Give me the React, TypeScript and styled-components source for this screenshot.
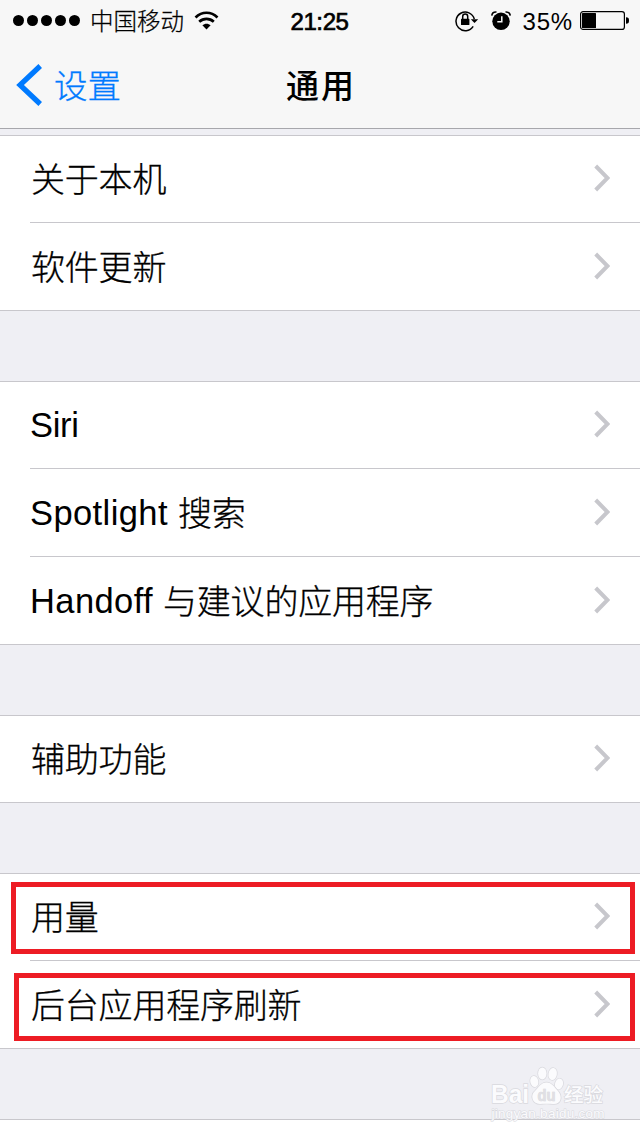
import React from 'react';
import styled, { createGlobalStyle } from 'styled-components';

const GlobalStyle = createGlobalStyle`
  * { box-sizing: border-box; }
  body {
    margin: 0;
    background: #efeff4;
    font-family: "Liberation Sans", "Noto Sans CJK SC", sans-serif;
    color: #000;
  }
`;

const Screen = styled.main`
  position: relative;
  width: 640px;
  height: 1136px;
  overflow: hidden;
  background: #efeff4;
`;

const Header = styled.header`
  height: 129px;
  background: #f7f7f7;
  border-bottom: 1px solid #a7a7ac;
`;

const StatusBar = styled.div`
  display: grid;
  grid-template-columns: 1fr auto 1fr;
  align-items: center;
  height: 41px;
  padding: 0 11px 0 13px;
`;

const StatusSide = styled.div<{ $end?: boolean }>`
  display: flex;
  align-items: center;
  justify-content: ${(p) => (p.$end ? 'flex-end' : 'flex-start')};
`;

const Indicators = styled.div`
  display: flex;
  align-items: center;
  gap: 12px;
`;

const Dots = styled.div`
  display: flex;
  gap: 3px;
  margin-right: 10px;
`;

const Dot = styled.i`
  width: 11px;
  height: 11px;
  border-radius: 50%;
  background: #000;
`;

const Carrier = styled.span`
  font-size: 23.5px;
  line-height: 38px;
  padding-top: 3px;
  font-weight: 300;
  -webkit-text-stroke: 0.25px #000;
  margin-right: 10px;
`;

const Clock = styled.time`
  font-size: 24px;
  line-height: 38px;
  -webkit-text-stroke: 0.7px #000;
  padding-top: 3px;
  margin-right: 3px;
  letter-spacing: -0.4px;
`;

const Percent = styled.span`
  font-size: 24px;
  line-height: 38px;
  letter-spacing: 0.8px;
  padding-top: 3px;
  margin: 0 7px 0 12px;
`;

const NavBar = styled.nav`
  display: grid;
  grid-template-columns: 1fr auto 1fr;
  align-items: center;
  height: 87px;
  padding-left: 16px;
`;

const Back = styled.a`
  display: flex;
  align-items: center;
  gap: 11px;
  color: #007aff;
  font-size: 33.5px;
  line-height: 44px;
  font-weight: 300;
  -webkit-text-stroke: 0.3px #007aff;
`;

const BackLabel = styled.span`
  padding-top: 4px;
`;

const Title = styled.h1`
  margin: 0 14px 0 0;
  padding-top: 4px;
  font-size: 33px;
  line-height: 44px;
  letter-spacing: 2px;
  font-weight: 500;
`;

const List = styled.div`
  display: flex;
  flex-direction: column;
  gap: 70px;
  padding-top: 6px;
`;

const Group = styled.section`
  border-top: 1px solid #c8c7cc;
  background: #fff;
`;

const Row = styled.div`
  position: relative;
  display: flex;
  align-items: center;
  justify-content: space-between;
  height: 88px;
  padding: 0 30px 3px;
  font-size: 34px;
  &:first-child { height: 87px; }
  &::after {
    content: '';
    position: absolute;
    left: 30px;
    right: 0;
    bottom: 0;
    height: 1px;
    background: #c8c7cc;
  }
  &:last-child::after { left: 0; }
`;

const Label = styled.div`
  display: flex;
  align-items: center;
  line-height: 50px;
`;

const Latin = styled.span<{ $tracking: number }>`
  font-size: 34.5px;
  letter-spacing: ${(p) => p.$tracking}px;
  padding-top: 2px;
  margin-right: 10px;
`;

const Han = styled.span<{ $indent?: number }>`
  padding-top: 4px;
  padding-left: ${(p) => p.$indent ?? 0}px;
  font-size: 34px;
  letter-spacing: -0.2px;
  font-weight: 300;
  -webkit-text-stroke: 0.3px #000;
`;

const Highlight = styled.div<{ $left: number; $top: number; $height: number }>`
  position: absolute;
  z-index: 1;
  left: ${(p) => p.$left}px;
  right: 5px;
  top: ${(p) => p.$top}px;
  height: ${(p) => p.$height}px;
  border: 5px solid #ed1c24;
`;

const Blank = styled.div`
  height: 40px;
`;

const Watermark = styled.svg`
  position: absolute;
  left: 484px;
  top: 1060px;
`;

const WifiIcon = () => (
  <svg width="26" height="20" viewBox="0 0 26 20" fill="none" stroke="#000">
    <path d="M1.500 6.400C8 .2 17 .2 23.500 6.400" strokeWidth="2.700" />
    <path d="M5.200 10.800C9.400 6.900 15.600 6.900 19.800 10.800" strokeWidth="2.700" />
    <path d="M12.500 18.500L8.400 14.200C10.700 12.100 14.300 12.100 16.600 14.200Z" fill="#000" stroke="none" />
  </svg>
);

const RotationLockIcon = () => (
  <svg width="24" height="22" viewBox="0 0 24 22" fill="none" stroke="#000" strokeWidth="1.500">
    <path d="M18.200 16.300A9.300 9.300 0 1 1 19.300 9" />
    <path d="M15.800 9.300H23.200L19.500 13Z" fill="#000" stroke="none" />
    <rect x="6" y="8.800" width="8.400" height="6.200" rx=".6" fill="#000" stroke="none" />
    <path d="M7.700 9V6.600A2.500 2.500 0 0 1 12.700 6.600V9" />
  </svg>
);

const AlarmIcon = () => (
  <svg width="20" height="20" viewBox="0 0 20 20" fill="none">
    <circle cx="10" cy="10.300" r="8.700" fill="#000" />
    <path d="M10.800 5.300V10.800H6.300" stroke="#f7f7f7" strokeWidth="1.500" />
    <path d="M.8 4.600C1 2.300 2.800 .8 5.500 1M19.200 4.600C19 2.300 17.200 .8 14.500 1" stroke="#000" strokeWidth="1.600" />
  </svg>
);

const BatteryIcon = () => (
  <svg width="49" height="19" viewBox="0 0 49 19">
    <rect x=".6" y=".6" width="43.800" height="17.800" rx="2.500" fill="none" stroke="#000" strokeWidth="1.200" />
    <rect x="2" y="2" width="14" height="15" rx=".5" fill="#000" />
    <path d="M46 6.200C48.300 6.200 49 7.300 49 9.500S48.300 12.800 46 12.800Z" fill="#000" />
  </svg>
);

const BackIcon = () => (
  <svg width="27" height="42" viewBox="0 0 27 42">
    <path d="M24.200 2L4 21L24.200 40" fill="none" stroke="#007aff" strokeWidth="5.200" />
  </svg>
);

const Chevron = () => (
  <svg width="16" height="28" viewBox="0 0 16 28">
    <path d="M1.700 2L13.500 14L1.700 26" fill="none" stroke="#c7c7cc" strokeWidth="4" />
  </svg>
);

type Mark = { left: number; top: number; height: number };
type Item = { latin?: string; tracking?: number; han?: string; indent?: number; mark?: Mark };

const groups: Item[][] = [
  [{ han: '关于本机', indent: 1 }, { han: '软件更新', indent: 1 }],
  [
    { latin: 'Siri', tracking: -0.3 },
    { latin: 'Spotlight', tracking: 0.4, han: '搜索' },
    { latin: 'Handoff', tracking: 0.4, han: '与建议的应用程序' },
  ],
  [{ han: '辅助功能', indent: 1 }],
  [
    { han: '用量', indent: 1, mark: { left: 11, top: 8, height: 72 } },
    { han: '后台应用程序刷新', indent: 1, mark: { left: 14, top: 12, height: 68 } },
  ],
];

export default function App() {
  return (
    <Screen>
      <GlobalStyle />
      <Header>
        <StatusBar>
          <StatusSide>
            <Dots>{[0, 1, 2, 3, 4].map((n) => <Dot key={n} />)}</Dots>
            <Carrier>中国移动</Carrier>
            <WifiIcon />
          </StatusSide>
          <Clock>21:25</Clock>
          <StatusSide $end>
            <Indicators>
              <RotationLockIcon />
              <AlarmIcon />
            </Indicators>
            <Percent>35%</Percent>
            <BatteryIcon />
          </StatusSide>
        </StatusBar>
        <NavBar>
          <Back><BackIcon /><BackLabel>设置</BackLabel></Back>
          <Title>通用</Title>
        </NavBar>
      </Header>
      <List>
        {groups.map((items, i) => (
          <Group key={i}>
            {items.map(({ latin, tracking, han, indent, mark }) => (
              <Row key={latin ?? han}>
                <Label>
                  {latin && <Latin $tracking={tracking ?? 0}>{latin}</Latin>}
                  {han && <Han $indent={indent}>{han}</Han>}
                </Label>
                <Chevron />
                {mark && <Highlight $left={mark.left} $top={mark.top} $height={mark.height} />}
              </Row>
            ))}
          </Group>
        ))}
        <Group><Blank /></Group>
      </List>
      <Watermark width="130" height="64" viewBox="0 0 130 64" fill="#fbfbfd" stroke="#d9d9de" strokeWidth="1.400" paintOrder="stroke" fontFamily="Liberation Sans, Noto Sans CJK SC, sans-serif" fontWeight="700">
        <text x="7" y="43" fontSize="25.500" textLength="38" lengthAdjust="spacingAndGlyphs">Bai</text>
        <ellipse cx="50.300" cy="21.500" rx="4" ry="5.500" transform="rotate(-12 50.300 21.500)" />
        <ellipse cx="58.300" cy="13.500" rx="4.200" ry="6" />
        <ellipse cx="68.700" cy="14" rx="4.200" ry="6" transform="rotate(10 68.700 14)" />
        <ellipse cx="75" cy="24" rx="4" ry="5.500" transform="rotate(15 75 24)" />
        <path d="M62.500 22.500C57 22.500 55 27 51 31C46 35 48 44 56 44C60 43.500 65 43.500 69 44C77 44.500 79 37 74 31C70 27 68 22.500 62.500 22.500Z" />
        <text x="53.500" y="41" fontSize="16" textLength="18" lengthAdjust="spacingAndGlyphs" fill="#e0e0e4" stroke="#d2d2d8" strokeWidth="0.600">du</text>
        <text x="80" y="41.500" fontSize="19.500" fontWeight="500" textLength="39">经验</text>
        <text x="7.500" y="57.500" fontSize="13.500" fontWeight="400" strokeWidth="1.100" textLength="113">jingyan.baidu.com</text>
      </Watermark>
    </Screen>
  );
}
